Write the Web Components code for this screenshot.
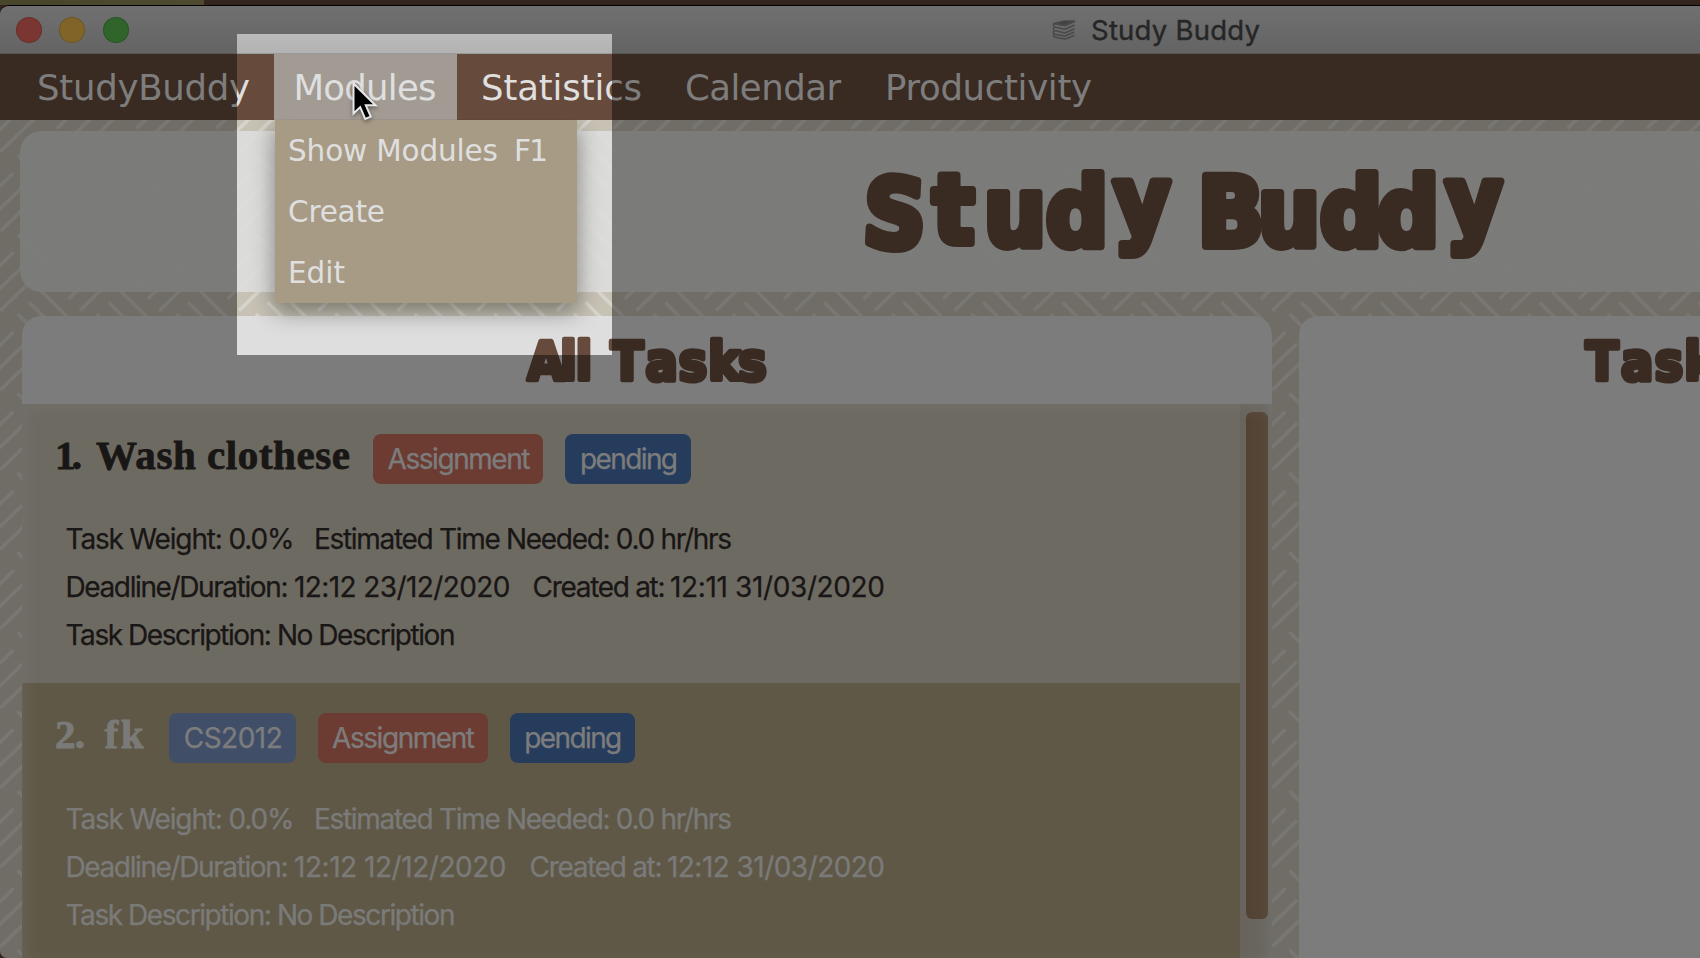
<!DOCTYPE html>
<html lang="en">
<head>
<meta charset="utf-8">
<title>Study Buddy</title>
<style>
html,body{margin:0;width:1700px;height:958px;overflow:hidden;background:#000}
body{font-family:Inter,"Liberation Sans",sans-serif}
</style>
</head>
<body>
<study-app></study-app>
<script>
const define = (name, html, setup) => {
  const t = document.createElement('template');
  t.innerHTML = html;
  customElements.define(name, class extends HTMLElement {
    connectedCallback() {
      if (this.shadowRoot) return;
      this.attachShadow({mode: 'open'}).append(t.content.cloneNode(true));
      if (setup) setup(this, this.shadowRoot);
    }
  });
};

/* One line of text, tracked so that it fills the width in its w attribute. */
define('fit-text', `<style>
:host{display:block;flex:none;white-space:nowrap}
span{display:inline-block}
</style><span><slot></slot></span>`, (el, root) => {
  const span = root.querySelector('span');
  const w = +el.getAttribute('w');
  const n = el.textContent.length;
  el.style.width = w + 'px';
  span.style.letterSpacing = ((w - span.getBoundingClientRect().width) / (n - 1)) + 'px';
});

/* Chunky display lettering, each glyph centred on its own x. */
define('chunky-title', `<style>
:host{display:block;flex:none;overflow:hidden}
svg{display:block;overflow:visible}
text{font-family:"DejaVu Sans Condensed","DejaVu Sans",sans-serif;font-stretch:condensed;font-weight:700;text-anchor:middle;fill:#664b3d;stroke:#664b3d;stroke-linejoin:round}
</style><svg><text></text></svg>`, (el, root) => {
  const g = n => el.getAttribute(n), svg = root.querySelector('svg'), t = root.querySelector('text');
  svg.setAttribute('width', g('w')); svg.setAttribute('height', g('h'));
  t.setAttribute('x', g('xs')); t.setAttribute('y', g('base'));
  if (g('dys')) t.setAttribute('dy', g('dys'));
  if (g('rot')) t.setAttribute('rotate', g('rot'));
  t.style.fontSize = g('size') + 'px'; t.style.strokeWidth = g('sw');
  t.textContent = g('label');
});

define('title-bar', `<style>
:host{display:flex;align-items:center;height:48px;box-sizing:border-box;background:linear-gradient(#c8c8c8,#b2b2b2);border-radius:9px 0 0 0;border-bottom:1px solid #9a9a9a;font-size:27.5px;color:#444;line-height:48px}
i{width:26px;height:26px;box-sizing:border-box;border-radius:50%;border:1px solid rgba(0,0,0,.15);flex:none;margin:1px 17.5px 0 0}
i:first-of-type{margin-left:15.5px}
svg{margin-left:906px;margin-right:15px;flex:none}
fit-text{padding-top:1px;-webkit-text-stroke:.4px}
</style>
<i style="background:#dd6158"></i><i style="background:#e6b247"></i><i style="background:#54b24c"></i>
<svg width="24" height="20" viewBox="0 0 24 20" fill="none" stroke="#838383" stroke-width="1.5" stroke-linejoin="round"><path d="M2 3.5 12 1h10.5L13 5.500z" fill="#757575"/><path d="M2 3.500Q.6 5 2.500 7L13 9.300 22.500 5M2 7.500Q.6 9 2.500 10.500L13 13 22.500 8.700M2 11Q.6 13 2.500 14.200L13 16 22.500 12M2 14.500Q.8 16 2.500 17L13 19 22.500 15.500M22.500 1.200V2.500M2 3.500 13 5.500 22.500 1.500"/></svg>
<fit-text w="169">Study Buddy</fit-text>`);

define('menu-item', `<style>
:host{display:flex;flex:none;box-sizing:border-box;height:65.5px;padding-left:22px;line-height:67px;font-size:35.5px}
:host([open]){background:#a29b93}
</style><slot></slot>`);

define('menu-bar', `<style>
:host{display:flex;height:65.5px;background:#664b3d;color:#dfdfdf;font-family:"DejaVu Sans",sans-serif;position:relative;z-index:3}
.drop{position:absolute;left:275px;top:65.500px;width:302px;height:183.500px;background:#a89b86;box-shadow:0 8px 22px rgba(0,0,0,.42);clip-path:inset(0 -50px -50px -50px);font-size:29.5px}
.row{display:flex;height:61.2px;line-height:62px;padding-left:13px;gap:18px}
</style>
<menu-item style="width:274px;padding-left:37px"><fit-text w="213">StudyBuddy</fit-text></menu-item>
<menu-item open style="width:183px;padding-left:19.500px"><fit-text w="143">Modules</fit-text></menu-item>
<menu-item style="width:205px;padding-left:24px"><fit-text w="161">Statistics</fit-text></menu-item>
<menu-item style="width:202px;padding-left:23px"><fit-text w="156">Calendar</fit-text></menu-item>
<menu-item style="padding-left:21px"><fit-text w="207">Productivity</fit-text></menu-item>
<div class="drop">
<div class="row"><fit-text w="210">Show Modules</fit-text><fit-text w="34" style="margin-left:-2px">F1</fit-text></div>
<div class="row"><fit-text w="97">Create</fit-text></div>
<div class="row"><fit-text w="57">Edit</fit-text></div>
</div>`);

define('tag-pill', `<style>
:host{display:flex;flex:none;height:50px;line-height:51px;border-radius:8px;justify-content:center;color:#dedede;font-size:28px;box-sizing:border-box;padding-left:2px}
</style><slot></slot>`);

define('task-card', `<style>
:host{display:block;box-sizing:border-box;height:279.5px;padding:30px 0 0 33px;background:#c3bdaf;color:#2e2926;font-size:28px;-webkit-text-stroke:.25px}
:host([selected]){background:#aa9d7d;color:#dadad8}
.head{display:flex;height:50px}
.head ::slotted(fit-text){font:700 41px/43px "Liberation Serif",serif;-webkit-text-stroke:.8px}
.body{padding:31.500px 0 0 10.500px}
</style><div class="head"><slot name="head"></slot></div><div class="body"><slot></slot></div>`);

define('info-row', `<style>:host{display:flex;height:48.2px;line-height:48px}</style><slot></slot>`);

define('task-list', `<style>
:host{display:flex;height:554px;position:relative;overflow:hidden;background:#c3bdaf}
.cards{width:1217.5px;flex:none;margin-top:-.5px}
.track{flex:1;background:linear-gradient(90deg,#bab1a5,#bcb5a9 60%,#c6c3ba);padding:8px 4px 0 6.5px}
.thumb{height:507px;border-radius:6px;background:linear-gradient(90deg,#94775b,#977b60 60%,#9c8268)}
:host::after{content:"";position:absolute;inset:0;box-shadow:inset 5px 4px 14px rgba(222,222,222,.3);pointer-events:none}
</style><div class="cards"><slot></slot></div><div class="track"><div class="thumb"></div></div>`);

define('white-panel', `<style>
:host{display:block;flex:none;box-sizing:border-box;overflow:hidden;background:#dedede;border-radius:19px 19px 0 0}
</style><slot></slot>`);

define('spot-light', `<style>
:host{position:absolute;left:236.500px;top:34px;width:375.500px;height:320.500px;z-index:8;box-shadow:0 0 0 2000px rgba(0,0,0,.44);pointer-events:none}
svg{position:absolute;left:113.500px;top:45px;filter:drop-shadow(0 2px 2px rgba(0,0,0,.4))}
</style><svg width="32" height="46" viewBox="0 0 32 46"><path d="M3.500 4.500V34.500L10.200 28.200 15.200 40 20.800 37.600 15.800 26.300H25.500z" fill="#000" stroke="#e8e8e8" stroke-width="2"/></svg>`);

define('study-app', `<style>
:host{display:block;width:1700px;height:958px;overflow:hidden;position:relative;background:#5b4137}
.desk{height:5px;background:linear-gradient(90deg,#7f7b4c,#8a8555 204px,#5b4137 204px)}
.win{height:952px;border-top:1px solid #000;background:#c7c2b4;position:relative;border-radius:9px 0 0 7px;overflow:hidden}
.content{height:839px;position:relative;overflow:hidden}
.weave{position:absolute;inset:0;width:1700px;height:839px}
.inner{position:relative;padding-top:11px}
.banner{margin-left:20px;width:1800px;height:161.500px;border-radius:21px;background:rgba(222,222,222,.88)}
.cols{display:flex;gap:26.500px;margin:24px 0 0 22px}
.list{width:1250px;height:642px}
.detail{width:600px;height:642px}
</style>
<div class="desk"></div>
<div class="win">
<title-bar></title-bar>
<menu-bar></menu-bar>
<div class="content">
<svg class="weave"><defs><pattern id="p" width="79.500" height="79.500" patternUnits="userSpaceOnUse" patternTransform="translate(0 -119.5)"><g id="g" stroke="#d7d5cd" stroke-width="3.500" stroke-linecap="round"></g></pattern></defs><rect width="1700" height="839" fill="url(#p)"/></svg>
<div class="inner">
<div class="banner"><chunky-title label="Study Buddy" w="1680" h="161" size="96" sw="8" base="115" xs="873 933.500 995 1057 1122 1165 1211 1269 1331 1388 1454" dys="0 -3 3 0 -12 12 0 0 0 0 -12" rot="3 0 0 0 0 0 0 0 0 0 0"></chunky-title></div>
<div class="cols">
<white-panel class="list">
<chunky-title label="All Tasks" w="1250" h="88" size="53" sw="4.500" base="63.500" xs="524 546.500 562 582 605 639.500 671 702 730.500"></chunky-title>
<task-list>
<task-card>
<fit-text slot="head" w="27">1.</fit-text><fit-text slot="head" w="254" style="margin-left:14px;margin-right:23px">Wash clothese</fit-text>
<tag-pill slot="head" style="width:170px;background:#c16959;margin-right:22px"><fit-text w="143">Assignment</fit-text></tag-pill>
<tag-pill slot="head" style="width:126px;background:#426ba4"><fit-text w="98">pending</fit-text></tag-pill>
<info-row><fit-text w="229" style="margin-right:19.500px">Task Weight: 0.0%</fit-text><fit-text w="418">Estimated Time Needed: 0.0 hr/hrs</fit-text></info-row>
<info-row><fit-text w="223" style="margin-right:5.500px">Deadline/Duration:</fit-text><fit-text w="216.500" style="margin-right:22px">12:12 23/12/2020</fit-text><fit-text w="133" style="margin-right:4.500px">Created at:</fit-text><fit-text w="215">12:11 31/03/2020</fit-text></info-row>
<info-row><fit-text w="390">Task Description: No Description</fit-text></info-row>
</task-card>
<task-card selected>
<fit-text slot="head" w="30">2.</fit-text><fit-text slot="head" w="39" style="margin-left:19.500px;margin-right:25.500px">fk</fit-text>
<tag-pill slot="head" style="width:126.500px;background:#748bba;margin-right:22px"><fit-text w="99">CS2012</fit-text></tag-pill>
<tag-pill slot="head" style="width:170px;background:#c16959;margin-right:22px"><fit-text w="143">Assignment</fit-text></tag-pill>
<tag-pill slot="head" style="width:125.500px;background:#426ba4"><fit-text w="98">pending</fit-text></tag-pill>
<info-row><fit-text w="229" style="margin-right:19.500px">Task Weight: 0.0%</fit-text><fit-text w="418">Estimated Time Needed: 0.0 hr/hrs</fit-text></info-row>
<info-row><fit-text w="223" style="margin-right:5.500px">Deadline/Duration:</fit-text><fit-text w="212.500" style="margin-right:23px">12:12 12/12/2020</fit-text><fit-text w="133" style="margin-right:4.500px">Created at:</fit-text><fit-text w="218">12:12 31/03/2020</fit-text></info-row>
<info-row><fit-text w="390">Task Description: No Description</fit-text></info-row>
</task-card>
</task-list>
</white-panel>
<white-panel class="detail">
<chunky-title label="Task" w="600" h="88" size="53" sw="4.500" base="63.500" xs="303 338 370 401"></chunky-title>
</white-panel>
</div>
</div>
</div>
</div>
<spot-light></spot-light>`, (el, root) => {
  /* Basket weave: three rising and three falling strokes, wrapped round the tile edges. */
  const P = 79.5, g = root.getElementById('g');
  const strokes = [];
  for (let i = 0; i < 3; i++) {
    strokes.push([58 + i * 11.5, 127 + i * 11.5, 34, -33]);
    strokes.push([18.5 + i * 11.7, 314.5 - i * 11.7, 33, 33]);
  }
  let d = '';
  for (const [x, y, dx, dy] of strokes) {
    const x0 = x % P, y0 = y % P;
    for (const a of [-P, 0, P]) for (const b of [-P, 0, P]) d += `M${x0 + a} ${y0 + b}l${dx} ${dy}`;
  }
  const path = document.createElementNS('http://www.w3.org/2000/svg', 'path');
  path.setAttribute('d', d);
  g.append(path);
});
</script>
</body>
</html>
